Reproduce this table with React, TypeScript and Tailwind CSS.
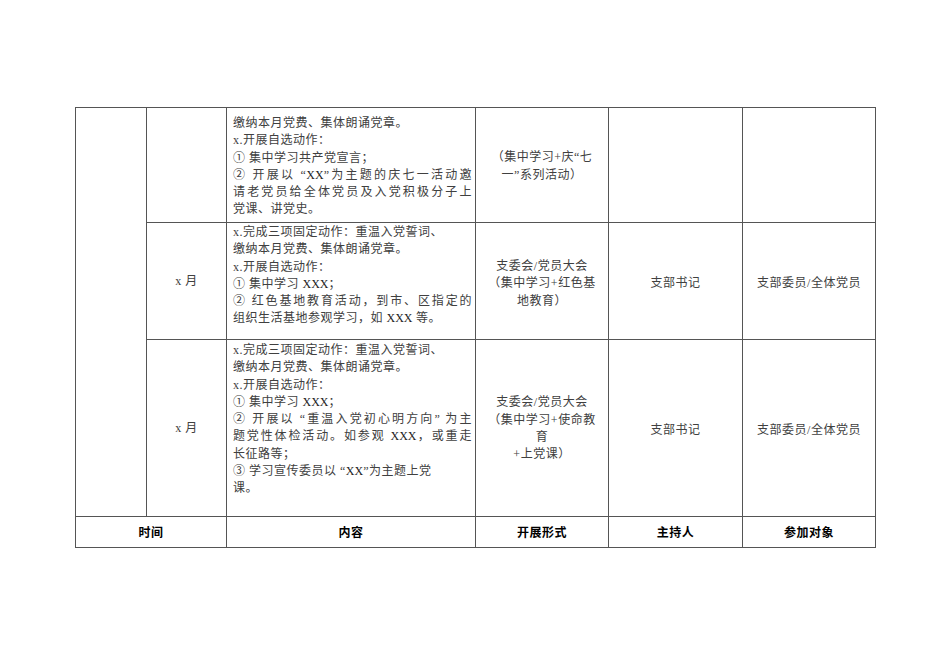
const font = { fontFamily: '"Liberation Serif", "Noto Sans CJK SC", serif' };

type Line = { text: string; full?: boolean };

const rows: {
  month?: string;
  pad: string;
  height: string;
  lines: Line[];
  form: string[];
  formPad?: string;
  host?: string;
  people?: string;
}[] = [
  {
    pad: "pt-[7px]",
    height: "h-[115px]",
    lines: [
      { text: "缴纳本月党费、集体朗诵党章。" },
      { text: "x.开展自选动作：" },
      { text: "① 集中学习共产党宣言；" },
      { text: "② 开展以 “XX”为主题的庆七一活动邀", full: true },
      { text: "请老党员给全体党员及入党积极分子上", full: true },
      { text: "党课、讲党史。" },
    ],
    form: ["（集中学习+庆“七", "一”系列活动）"],
    formPad: "pt-[3px]",
  },
  {
    month: "x 月",
    pad: "pt-[1px]",
    height: "h-[117px]",
    lines: [
      { text: "x.完成三项固定动作：重温入党誓词、" },
      { text: "缴纳本月党费、集体朗诵党章。" },
      { text: "x.开展自选动作：" },
      { text: "① 集中学习 XXX；" },
      { text: "② 红色基地教育活动，到市、区指定的", full: true },
      { text: "组织生活基地参观学习，如 XXX 等。" },
    ],
    form: ["支委会/党员大会", "（集中学习+红色基", "地教育）"],
    formPad: "pt-[6px]",
    host: "支部书记",
    people: "支部委员/全体党员",
  },
  {
    month: "x 月",
    pad: "pt-[2px]",
    height: "h-[177px]",
    lines: [
      { text: "x.完成三项固定动作：重温入党誓词、" },
      { text: "缴纳本月党费、集体朗诵党章。" },
      { text: "x.开展自选动作：" },
      { text: "① 集中学习 XXX；" },
      { text: "② 开展以 “重温入党初心明方向” 为主", full: true },
      { text: "题党性体检活动。如参观 XXX，或重走", full: true },
      { text: "长征路等；" },
      { text: "③ 学习宣传委员以 “XX”为主题上党" },
      { text: "课。" },
    ],
    form: ["支委会/党员大会", "（集中学习+使命教", "育", "+上党课）"],
    formPad: "pt-[2px]",
    host: "支部书记",
    people: "支部委员/全体党员",
  },
];

const cell = "border border-[#555] p-0";

// Latin placeholders sit tighter than the spaced-out Chinese text
function Text({ value }: { value: string }) {
  return (
    <>
      {value.split(/(X+)/).map((part, i) =>
        /^X+$/.test(part) ? (
          <span key={i} className="tracking-normal text-[#222]">
            {part}
          </span>
        ) : (
          part
        )
      )}
    </>
  );
}

export default function App() {
  return (
    <div className="min-h-[672px] w-[950px] bg-white pl-[75px] pt-[107px]" style={font}>
      <table className="table-fixed border-collapse text-[12px] leading-[17.3px] tracking-[0.5px] text-[#404040]">
        <colgroup>
          <col className="w-[71px]" />
          <col className="w-[80px]" />
          <col className="w-[249px]" />
          <col className="w-[133px]" />
          <col className="w-[134px]" />
          <col className="w-[133px]" />
        </colgroup>
        <tbody>
          {rows.map((row, i) => (
            <tr key={i} className={row.height}>
              {i === 0 && <td rowSpan={3} className={cell} />}
              <td className={`${cell} text-center align-middle`}>
                <div className="pt-[2px]">{row.month}</div>
              </td>
              <td className={`${cell} align-top`}>
                <div className={`${row.pad} pl-[6px] pr-[3px]`}>
                  {row.lines.map((l, j) => (
                    <div
                      key={j}
                      className={l.full ? "whitespace-nowrap text-justify [text-align-last:justify]" : "whitespace-nowrap"}
                    >
                      <Text value={l.text} />
                    </div>
                  ))}
                </div>
              </td>
              <td className={`${cell} text-center align-middle`}>
                <div className={row.formPad}>
                  {row.form.map((t, j) => (
                    <div key={j} className="whitespace-nowrap">
                      {t}
                    </div>
                  ))}
                </div>
              </td>
              <td className={`${cell} text-center align-middle`}>
                <div className="pt-[5px]">{row.host}</div>
              </td>
              <td className={`${cell} text-center align-middle`}>
                <div className="pt-[5px]">{row.people}</div>
              </td>
            </tr>
          ))}
          <tr className="h-[31px] font-bold text-black">
            <td colSpan={2} className={`${cell} text-center align-middle`}>
              <div className="pt-[4px]">时间</div>
            </td>
            <td className={`${cell} text-center align-middle`}>
              <div className="pt-[4px]">内容</div>
            </td>
            <td className={`${cell} text-center align-middle`}>
              <div className="pt-[4px]">开展形式</div>
            </td>
            <td className={`${cell} text-center align-middle`}>
              <div className="pt-[4px]">主持人</div>
            </td>
            <td className={`${cell} text-center align-middle`}>
              <div className="pt-[4px]">参加对象</div>
            </td>
          </tr>
        </tbody>
      </table>
    </div>
  );
}
